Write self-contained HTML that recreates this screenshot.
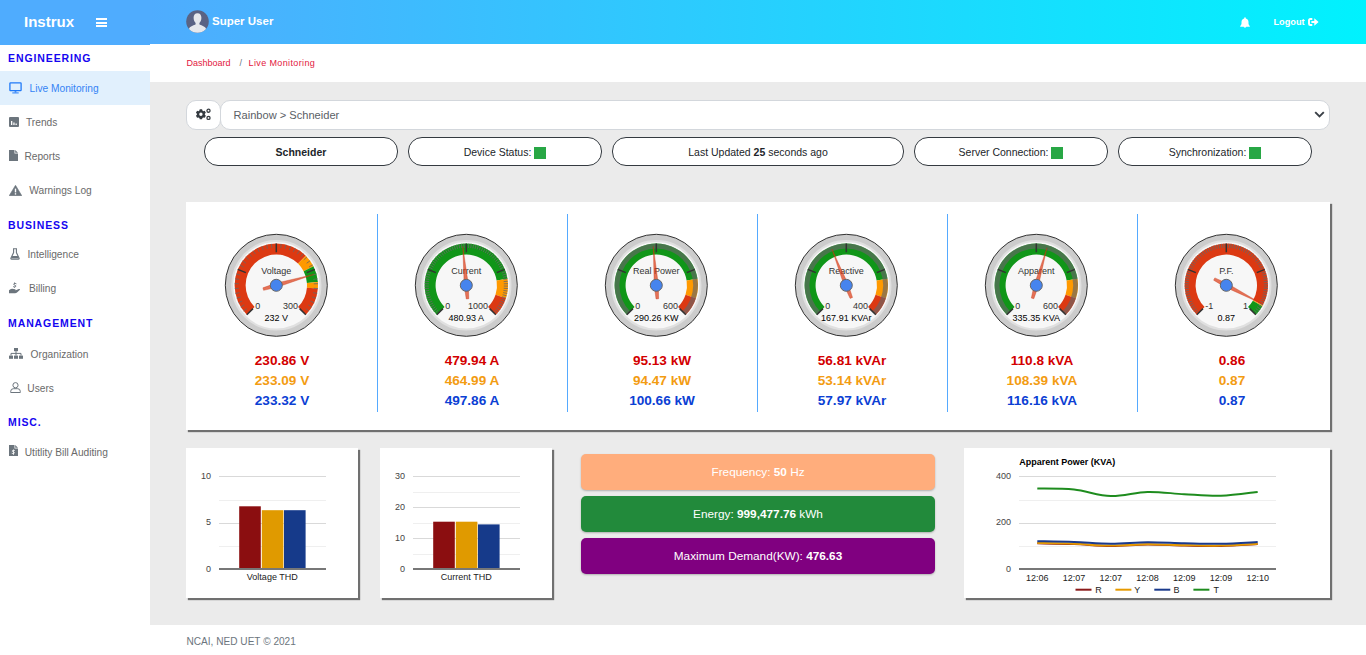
<!DOCTYPE html>
<html><head><meta charset="utf-8">
<style>
*{box-sizing:border-box;margin:0;padding:0}
html,body{width:1366px;height:655px;overflow:hidden;background:#fff;font-family:"Liberation Sans",sans-serif}
.abs{position:absolute}
#brand{left:0;top:0;width:150px;height:45px;background:#4facfe}
#nav{left:150px;top:0;width:1216px;height:44px;background:linear-gradient(to right,#4facfe,#00f2fe)}
#crumb{left:150px;top:44px;width:1216px;height:38px;background:#fff}
#content{left:150px;top:82px;width:1216px;height:543px;background:#ebebeb}
#footer{left:150px;top:625px;width:1216px;height:30px;background:#fff}
.txt{position:absolute;white-space:nowrap;line-height:1}
.sec{position:absolute;left:8px;font-size:10.5px;font-weight:bold;color:#1505f0;letter-spacing:0.9px}
.item{position:absolute;font-size:10.2px;color:#6a6a6a}
.pill{position:absolute;top:137px;height:29px;border:1px solid #343a40;border-radius:14px;background:#fff;font-size:10.5px;color:#212529;text-align:center;line-height:28px;white-space:nowrap}
.sq{display:inline-block;width:12px;height:12px;background:#28a745;vertical-align:-3px;margin-left:3px}
.panel{position:absolute;background:#fff;box-shadow:2px 2px 1px #707070}
.box{position:absolute;left:581px;width:354px;height:36px;border-radius:5px;color:#fff;font-size:11.8px;text-align:center;line-height:37px;white-space:nowrap;box-shadow:0 1px 2px rgba(0,0,0,.25)}
</style></head><body>
<div class="abs" id="brand"></div>
<div class="abs" id="nav"></div>
<div class="abs" id="crumb"></div>
<div class="abs" id="content"></div>
<div class="abs" id="footer"></div>

<!-- brand -->
<div class="txt" style="left:24px;top:14px;font-size:15px;font-weight:bold;color:#fff">Instrux</div>
<div class="abs" style="left:96px;top:18px;width:11px;height:2px;background:#fff"></div>
<div class="abs" style="left:96px;top:21.5px;width:11px;height:2px;background:#fff"></div>
<div class="abs" style="left:96px;top:25px;width:11px;height:2px;background:#fff"></div>

<!-- avatar -->
<svg class="abs" style="left:186px;top:10px" width="23" height="23" viewBox="0 0 23 23">
<defs><clipPath id="av"><circle cx="11.5" cy="11.5" r="11.3"/></clipPath></defs>
<circle cx="11.5" cy="11.5" r="11.3" fill="#5a6384"/>
<g clip-path="url(#av)" fill="#e6e8ec">
<path d="M11.5 3.2c2.6 0 3.9 2 3.9 4.6 0 2.3-1 4.3-2 5.3v1.2c0 .6 3.8 1.3 5.6 3 1 1 1.5 2.5 1.5 5.7H2.5c0-3.2.5-4.7 1.5-5.7 1.8-1.7 5.6-2.4 5.6-3v-1.2c-1-1-2-3-2-5.3 0-2.6 1.3-4.6 3.9-4.6z"/>
</g></svg>
<div class="txt" style="left:212px;top:16px;font-size:11.5px;font-weight:bold;color:#fff">Super User</div>

<!-- bell -->
<svg class="abs" style="left:1240px;top:17px" width="10" height="11" viewBox="0 0 10 11">
<path d="M5 0.3c.5 0 .8.3.8.8v.3c1.7.4 2.7 1.8 2.7 3.5v1.6c0 1 .6 1.8 1.3 2.5v.8H.2v-.8C.9 8.3 1.5 7.5 1.5 6.5V4.9c0-1.7 1-3.1 2.7-3.5v-.3c0-.5.3-.8.8-.8z M3.6 9.3h2.8c0 .8-.6 1.4-1.4 1.4s-1.4-.6-1.4-1.4z" fill="#fff"/>
</svg>
<div class="txt" style="left:1273.5px;top:18px;font-size:9.2px;font-weight:bold;color:#fff">Logout</div>
<svg class="abs" style="left:1308.3px;top:18px" width="11" height="8" viewBox="0 0 11 8">
<path d="M4.3 1H2.3Q1 1 1 2.3v3.4Q1 7 2.3 7h2" stroke="#fff" stroke-width="1.9" fill="none"/>
<path d="M3.4 2.9h2.9V.2L10.6 4 6.3 7.8V5.1H3.4z" fill="#fff"/>
</svg>

<!-- sidebar -->
<div class="sec" style="top:52px">ENGINEERING</div>
<div class="abs" style="left:0;top:71px;width:150px;height:34px;background:#e1f0fd"></div>
<svg class="abs" style="left:9px;top:82px" width="13" height="12" viewBox="0 0 13 12">
<rect x="0.9" y="0.9" width="11.2" height="7.8" rx="0.6" fill="none" stroke="#2079f8" stroke-width="1.3"/>
<rect x="5.6" y="9.2" width="1.8" height="1.2" fill="#2079f8"/><rect x="3.3" y="10.3" width="6.4" height="1.2" fill="#2079f8" fill-opacity="0.8"/>
</svg>
<div class="item" style="left:29.5px;top:83px;color:#3483f5">Live Monitoring</div>

<svg class="abs" style="left:9px;top:116.5px" width="10" height="10" viewBox="0 0 10 10">
<rect x="0" y="0" width="10" height="10" rx="1" fill="#6c757d"/>
<rect x="2" y="4" width="1.3" height="4" fill="#fff"/><rect x="4.3" y="5.5" width="1.3" height="2.5" fill="#fff"/><rect x="6.5" y="6.5" width="1.3" height="1.5" fill="#fff"/>
</svg>
<div class="item" style="left:26px;top:117px">Trends</div>

<svg class="abs" style="left:9px;top:150px" width="9" height="11" viewBox="0 0 9 11">
<path d="M0 0H5.5V3.5H9V11H0Z M6.2 0L9 2.8H6.2Z" fill="#6c757d"/>
</svg>
<div class="item" style="left:24.4px;top:151px">Reports</div>

<svg class="abs" style="left:9px;top:184.5px" width="13" height="11" viewBox="0 0 13 11">
<path d="M6.5 0.3L12.8 10.7H0.2Z" fill="#6c757d" stroke="#6c757d" stroke-width="0.6" stroke-linejoin="round"/>
<rect x="5.8" y="3.6" width="1.4" height="3.8" fill="#fff"/><rect x="5.8" y="8.2" width="1.4" height="1.4" fill="#fff"/>
</svg>
<div class="item" style="left:29.3px;top:185px">Warnings Log</div>

<div class="sec" style="top:219px">BUSINESS</div>
<svg class="abs" style="left:9.5px;top:248px" width="10" height="12" viewBox="0 0 10 12">
<path d="M3 .8h4M3.6 .8v3.8L.9 10.2q-.3.9.7.9h6.8q1 0 .7-.9L6.4 4.6V.8" fill="none" stroke="#6c757d" stroke-width="1.1"/>
<path d="M2.2 8h5.6l.9 2.3H1.3z" fill="#6c757d"/>
</svg>
<div class="item" style="left:27.4px;top:249px">Intelligence</div>

<svg class="abs" style="left:9px;top:282px" width="12" height="12" viewBox="0 0 12 12">
<path d="M5.5 0.5v1M4.2 4.6q1.3.8 2.5 0q.6-1-.9-1.4q-1.5-.4-.9-1.4q1.2-.8 2.5 0M5.5 4.8v.8" fill="none" stroke="#6c757d" stroke-width="1"/>
<path d="M0 8.2q1.5-1.7 3.3-1.5l2.8.5q.9.3.4 1H3.8h3l3-1.2q1.6-.3 1.2.8L8 10.5q-.8.8-2 .8H0z" fill="#6c757d"/>
</svg>
<div class="item" style="left:28.9px;top:283px">Billing</div>

<div class="sec" style="top:317px">MANAGEMENT</div>
<svg class="abs" style="left:9px;top:348px" width="14" height="11" viewBox="0 0 14 11">
<rect x="5" y="0" width="4" height="3.2" fill="#6c757d"/><rect x="0" y="7.6" width="4" height="3.2" fill="#6c757d"/><rect x="5" y="7.6" width="4" height="3.2" fill="#6c757d"/><rect x="10" y="7.6" width="4" height="3.2" fill="#6c757d"/>
<path d="M7 3.2v4.4M2 7.6V5.4h10v2.2" fill="none" stroke="#6c757d" stroke-width="1"/>
</svg>
<div class="item" style="left:30.6px;top:348.5px">Organization</div>

<svg class="abs" style="left:9.5px;top:381.5px" width="11" height="11" viewBox="0 0 11 11">
<circle cx="5.5" cy="3.2" r="2.6" fill="none" stroke="#6c757d" stroke-width="1"/>
<path d="M.7 10.5V9.4q0-2.7 2.7-2.7h4.2q2.7 0 2.7 2.7v1.1z" fill="none" stroke="#6c757d" stroke-width="1"/>
</svg>
<div class="item" style="left:27.3px;top:382.5px">Users</div>

<div class="sec" style="top:416px">MISC.</div>
<svg class="abs" style="left:9px;top:445px" width="9" height="11" viewBox="0 0 9 11">
<path d="M0 0H5.5V3.5H9V11H0Z M6.2 0L9 2.8H6.2Z" fill="#6c757d"/>
<path d="M4.5 4.6v5.2M5.8 5.6q-1.3-.7-2.4 0q-.6.9.9 1.2q1.6.4.9 1.4q-1.2.7-2.5 0" fill="none" stroke="#fff" stroke-width=".8"/>
</svg>
<div class="item" style="left:24.7px;top:446.5px">Utitlity Bill Auditing</div>

<!-- breadcrumb -->
<div class="txt" style="left:186.5px;top:59px;font-size:9px;color:#e3173e">Dashboard</div>
<div class="txt" style="left:239.5px;top:59px;font-size:9px;color:#6c757d">/</div>
<div class="txt" style="left:248.5px;top:59px;font-size:9px;letter-spacing:0.38px;color:#e3173e">Live Monitoring</div>

<!-- select row -->
<div class="abs" style="left:186px;top:100px;width:35px;height:30px;background:#fff;border:1px solid #d3d7dc;border-radius:10px"></div>
<svg class="abs" style="left:194px;top:106px" width="20" height="16" viewBox="0 0 20 16">
<path d="M5.40 4.59L5.73 3.23L8.07 3.23L8.40 4.59L9.36 5.15L10.70 4.75L11.87 6.78L10.86 7.74L10.86 8.86L11.87 9.82L10.70 11.85L9.36 11.45L8.40 12.01L8.07 13.37L5.73 13.37L5.40 12.01L4.44 11.45L3.10 11.85L1.93 9.82L2.94 8.86L2.94 7.74L1.93 6.78L3.10 4.75L4.44 5.15ZM8.60 8.30A1.7 1.7 0 1 0 5.20 8.30A1.7 1.7 0 1 0 8.60 8.30Z" fill="#343a40" fill-rule="evenodd"/>
<circle cx="14.5" cy="4.7" r="1.55" fill="none" stroke="#343a40" stroke-width="1.3"/>
<circle cx="14.5" cy="11.9" r="1.55" fill="none" stroke="#343a40" stroke-width="1.3"/>
</svg>
<div class="abs" style="left:220px;top:100px;width:1110px;height:30px;background:#fff;border:1px solid #d3d7dc;border-radius:10px"></div>
<div class="txt" style="left:233.5px;top:110.3px;font-size:11.1px;color:#5a6066">Rainbow &gt; Schneider</div>
<svg class="abs" style="left:1314.2px;top:110.8px" width="11" height="7" viewBox="0 0 11 7">
<path d="M1.2 1.2L5.5 5.5 9.8 1.2" fill="none" stroke="#3a4047" stroke-width="1.9"/>
</svg>

<!-- pills -->
<div class="pill" style="left:204px;width:194px;font-weight:bold">Schneider</div>
<div class="pill" style="left:408px;width:194px">Device Status:<span class="sq"></span></div>
<div class="pill" style="left:612px;width:292px">Last Updated <b>25</b> seconds ago</div>
<div class="pill" style="left:914px;width:194px">Server Connection:<span class="sq"></span></div>
<div class="pill" style="left:1118px;width:194px">Synchronization:<span class="sq"></span></div>

<!-- panels -->
<div class="panel" style="left:186px;top:202px;width:1144px;height:228px"></div>
<div class="panel" style="left:186px;top:448px;width:172px;height:150px"></div>
<div class="panel" style="left:380px;top:448px;width:172px;height:150px"></div>
<div class="panel" style="left:964px;top:448px;width:366px;height:150px"></div>

<div class="box" style="top:454px;background:#ffad7c">Frequency: <b>50</b> Hz</div>
<div class="box" style="top:496px;background:#228a3b">Energy: <b>999,477.76</b> kWh</div>
<div class="box" style="top:538px;background:#800080">Maximum Demand(KW): <b>476.63</b></div>

<svg class="abs" style="left:0;top:0" width="1366" height="655" viewBox="0 0 1366 655" font-family="Liberation Sans, sans-serif">
<circle cx="276.3" cy="285.3" r="51" fill="#cccccc" stroke="#333333" stroke-width="1"/>
<circle cx="276.3" cy="285.3" r="44.2" fill="#f7f7f7" stroke="#e0e0e0" stroke-width="2"/>
<path d="M246.81 314.79A41.7 41.7 0 0 1 305.79 255.81L298.01 263.59A30.7 30.7 0 0 0 254.59 307.01Z" fill="#dc3912"/>
<path d="M305.79 255.81A41.7 41.7 0 0 1 313.45 266.37L303.65 271.36A30.7 30.7 0 0 0 298.01 263.59Z" fill="#ff9900"/>
<path d="M313.45 266.37A41.7 41.7 0 0 1 317.87 282.03L306.91 282.89A30.7 30.7 0 0 0 303.65 271.36Z" fill="#109618"/>
<path d="M317.87 282.03A41.7 41.7 0 0 1 317.87 288.57L306.91 287.71A30.7 30.7 0 0 0 306.91 282.89Z" fill="#ff9900"/>
<path d="M317.87 288.57A41.7 41.7 0 0 1 305.79 314.79L298.01 307.01A30.7 30.7 0 0 0 306.91 287.71Z" fill="#dc3912"/>
<path d="M243.55 311.12L246.85 308.52M240.74 307.09L244.33 304.89M238.43 302.76L242.24 301.00M236.64 298.19L240.64 296.89M235.40 293.44L239.52 292.62M234.73 288.57L238.92 288.24M234.63 283.66L238.83 283.83M235.11 278.78L239.26 279.43M236.17 273.98L240.21 275.12M239.92 264.92L243.58 266.98M242.56 260.79L245.96 263.26M245.68 256.99L248.76 259.84M249.22 253.59L251.95 256.78M253.13 250.63L255.47 254.12M257.37 248.15L259.28 251.89M261.87 246.18L263.32 250.12M266.57 244.75L267.55 248.84M271.40 243.89L271.89 248.06M281.20 243.89L280.71 248.06M286.03 244.75L285.05 248.84M290.73 246.18L289.28 250.12M295.23 248.15L293.32 251.89M299.47 250.63L297.13 254.12M303.38 253.59L300.65 256.78M306.92 256.99L303.84 259.84M310.04 260.79L306.64 263.26M312.68 264.92L309.02 266.98M316.43 273.98L312.39 275.12M317.49 278.78L313.34 279.43M317.97 283.66L313.77 283.83M317.87 288.57L313.68 288.24M317.20 293.44L313.08 292.62M315.96 298.19L311.96 296.89M314.17 302.76L310.36 301.00M311.86 307.09L308.27 304.89M309.05 311.12L305.75 308.52" stroke="#666666" stroke-width="1" stroke-opacity="0.8" fill="none"/>
<path d="M246.81 314.79L252.97 308.63M237.77 269.34L245.81 272.67M276.30 243.60L276.30 252.30M314.83 269.34L306.79 272.67M305.79 314.79L299.63 308.63" stroke="#333333" stroke-width="1.5" fill="none"/>
<text x="276.3" y="273.8" text-anchor="middle" font-size="9" fill="#333333">Voltage</text>
<text x="255.3" y="309.1" text-anchor="start" font-size="9" fill="#333333">0</text>
<text x="298.1" y="309.1" text-anchor="end" font-size="9" fill="#333333">300</text>
<text x="276.3" y="320.90000000000003" text-anchor="middle" font-size="9" fill="#000000">232 V</text>
<path d="M313.75 274.42L276.89 287.32L263.60 290.34L262.88 287.85L275.71 283.28Z" fill="#dc3912" fill-opacity="0.7" stroke="#c63310" stroke-width="0.6" stroke-opacity="0.6" stroke-linejoin="round"/>
<circle cx="276.3" cy="285.3" r="6" fill="#4684ee" stroke="#666666" stroke-width="1"/>
<circle cx="466.3" cy="285.3" r="51" fill="#cccccc" stroke="#333333" stroke-width="1"/>
<circle cx="466.3" cy="285.3" r="44.2" fill="#f7f7f7" stroke="#e0e0e0" stroke-width="2"/>
<path d="M436.81 314.79A41.7 41.7 0 1 1 507.49 278.78L496.62 280.50A30.7 30.7 0 1 0 444.59 307.01Z" fill="#109618"/>
<path d="M507.49 278.78A41.7 41.7 0 0 1 505.96 298.19L495.50 294.79A30.7 30.7 0 0 0 496.62 280.50Z" fill="#ff9900"/>
<path d="M505.96 298.19A41.7 41.7 0 0 1 495.79 314.79L488.01 307.01A30.7 30.7 0 0 0 495.50 294.79Z" fill="#dc3912"/>
<path d="M435.13 313.00L438.27 310.21M433.55 311.12L436.85 308.52M432.09 309.14L435.53 306.74M430.74 307.09L434.33 304.89M429.52 304.96L433.23 302.98M428.43 302.76L432.24 301.00M427.47 300.50L431.38 298.97M426.64 298.19L430.64 296.89M425.95 295.83L430.02 294.77M425.40 293.44L429.52 292.62M424.99 291.01L429.15 290.44M424.73 288.57L428.92 288.24M424.61 286.12L428.81 286.04M424.63 283.66L428.83 283.83M424.80 281.21L428.98 281.62M425.11 278.78L429.26 279.43M425.57 276.36L429.67 277.26M426.17 273.98L430.21 275.12M426.90 271.64L430.87 273.01M428.78 267.10L432.56 268.93M429.92 264.92L433.58 266.98M431.18 262.82L434.72 265.08M432.56 260.79L435.96 263.26M434.07 258.85L437.31 261.51M435.68 256.99L438.76 259.84M437.40 255.24L440.31 258.27M439.22 253.59L441.95 256.78M441.13 252.05L443.67 255.40M443.13 250.63L445.47 254.12M445.21 249.32L447.34 252.95M447.37 248.15L449.28 251.89M449.59 247.09L451.27 250.94M451.87 246.18L453.32 250.12M454.20 245.40L455.41 249.41M456.57 244.75L457.55 248.84M458.97 244.25L459.71 248.38M461.40 243.89L461.89 248.06M463.85 243.67L464.09 247.87M468.75 243.67L468.51 247.87M471.20 243.89L470.71 248.06M473.63 244.25L472.89 248.38M476.03 244.75L475.05 248.84M478.40 245.40L477.19 249.41M480.73 246.18L479.28 250.12M483.01 247.09L481.33 250.94M485.23 248.15L483.32 251.89M487.39 249.32L485.26 252.95M489.47 250.63L487.13 254.12M491.47 252.05L488.93 255.40M493.38 253.59L490.65 256.78M495.20 255.24L492.29 258.27M496.92 256.99L493.84 259.84M498.53 258.85L495.29 261.51M500.04 260.79L496.64 263.26M501.42 262.82L497.88 265.08M502.68 264.92L499.02 266.98M503.82 267.10L500.04 268.93M505.70 271.64L501.73 273.01M506.43 273.98L502.39 275.12M507.03 276.36L502.93 277.26M507.49 278.78L503.34 279.43M507.80 281.21L503.62 281.62M507.97 283.66L503.77 283.83M507.99 286.12L503.79 286.04M507.87 288.57L503.68 288.24M507.61 291.01L503.45 290.44M507.20 293.44L503.08 292.62M506.65 295.83L502.58 294.77M505.96 298.19L501.96 296.89M505.13 300.50L501.22 298.97M504.17 302.76L500.36 301.00M503.08 304.96L499.37 302.98M501.86 307.09L498.27 304.89M500.51 309.14L497.07 306.74M499.05 311.12L495.75 308.52M497.47 313.00L494.33 310.21" stroke="#666666" stroke-width="1" stroke-opacity="0.8" fill="none"/>
<path d="M436.81 314.79L442.97 308.63M427.77 269.34L435.81 272.67M466.30 243.60L466.30 252.30M504.83 269.34L496.79 272.67M495.79 314.79L489.63 308.63" stroke="#333333" stroke-width="1.5" fill="none"/>
<text x="466.3" y="273.8" text-anchor="middle" font-size="9" fill="#333333">Current</text>
<text x="445.3" y="309.1" text-anchor="start" font-size="9" fill="#333333">0</text>
<text x="488.1" y="309.1" text-anchor="end" font-size="9" fill="#333333">1000</text>
<text x="466.3" y="320.90000000000003" text-anchor="middle" font-size="9" fill="#000000">480.93 A</text>
<path d="M462.80 246.46L468.39 285.11L468.82 298.73L466.23 298.96L464.21 285.49Z" fill="#dc3912" fill-opacity="0.7" stroke="#c63310" stroke-width="0.6" stroke-opacity="0.6" stroke-linejoin="round"/>
<circle cx="466.3" cy="285.3" r="6" fill="#4684ee" stroke="#666666" stroke-width="1"/>
<circle cx="656.3" cy="285.3" r="51" fill="#cccccc" stroke="#333333" stroke-width="1"/>
<circle cx="656.3" cy="285.3" r="44.2" fill="#f7f7f7" stroke="#e0e0e0" stroke-width="2"/>
<path d="M626.81 314.79A41.7 41.7 0 1 1 697.49 278.78L686.62 280.50A30.7 30.7 0 1 0 634.59 307.01Z" fill="#109618"/>
<path d="M697.49 278.78A41.7 41.7 0 0 1 695.96 298.19L685.50 294.79A30.7 30.7 0 0 0 686.62 280.50Z" fill="#ff9900"/>
<path d="M695.96 298.19A41.7 41.7 0 0 1 685.79 314.79L678.01 307.01A30.7 30.7 0 0 0 685.50 294.79Z" fill="#dc3912"/>
<path d="M626.81 314.79A41.7 41.7 0 1 1 685.79 314.79L682.39 311.39A36.9 36.9 0 1 0 630.21 311.39Z" fill="#666666" fill-opacity="0.66"/>
<path d="M626.81 314.79L632.97 308.63M617.77 269.34L625.81 272.67M656.30 243.60L656.30 252.30M694.83 269.34L686.79 272.67M685.79 314.79L679.63 308.63" stroke="#333333" stroke-width="1.5" fill="none"/>
<text x="656.3" y="273.8" text-anchor="middle" font-size="9" fill="#333333">Real Power</text>
<text x="635.3" y="309.1" text-anchor="start" font-size="9" fill="#333333">0</text>
<text x="678.0999999999999" y="309.1" text-anchor="end" font-size="9" fill="#333333">600</text>
<text x="656.3" y="320.90000000000003" text-anchor="middle" font-size="9" fill="#000000">290.26 KW</text>
<path d="M653.32 246.41L658.39 285.14L658.64 298.76L656.04 298.96L654.21 285.46Z" fill="#dc3912" fill-opacity="0.7" stroke="#c63310" stroke-width="0.6" stroke-opacity="0.6" stroke-linejoin="round"/>
<circle cx="656.3" cy="285.3" r="6" fill="#4684ee" stroke="#666666" stroke-width="1"/>
<circle cx="846.3" cy="285.3" r="51" fill="#cccccc" stroke="#333333" stroke-width="1"/>
<circle cx="846.3" cy="285.3" r="44.2" fill="#f7f7f7" stroke="#e0e0e0" stroke-width="2"/>
<path d="M816.81 314.79A41.7 41.7 0 1 1 887.49 278.78L876.62 280.50A30.7 30.7 0 1 0 824.59 307.01Z" fill="#109618"/>
<path d="M887.49 278.78A41.7 41.7 0 0 1 885.96 298.19L875.50 294.79A30.7 30.7 0 0 0 876.62 280.50Z" fill="#ff9900"/>
<path d="M885.96 298.19A41.7 41.7 0 0 1 875.79 314.79L868.01 307.01A30.7 30.7 0 0 0 875.50 294.79Z" fill="#dc3912"/>
<path d="M816.81 314.79A41.7 41.7 0 1 1 875.79 314.79L872.39 311.39A36.9 36.9 0 1 0 820.21 311.39Z" fill="#666666" fill-opacity="0.66"/>
<path d="M816.81 314.79L822.97 308.63M807.77 269.34L815.81 272.67M846.30 243.60L846.30 252.30M884.83 269.34L876.79 272.67M875.79 314.79L869.63 308.63" stroke="#333333" stroke-width="1.5" fill="none"/>
<text x="846.3" y="273.8" text-anchor="middle" font-size="9" fill="#333333">Reactive</text>
<text x="825.3" y="309.1" text-anchor="start" font-size="9" fill="#333333">0</text>
<text x="868.0999999999999" y="309.1" text-anchor="end" font-size="9" fill="#333333">400</text>
<text x="846.3" y="320.90000000000003" text-anchor="middle" font-size="9" fill="#000000">167.91 KVAr</text>
<path d="M831.90 249.05L848.25 284.52L852.53 297.46L850.11 298.42L844.35 286.08Z" fill="#dc3912" fill-opacity="0.7" stroke="#c63310" stroke-width="0.6" stroke-opacity="0.6" stroke-linejoin="round"/>
<circle cx="846.3" cy="285.3" r="6" fill="#4684ee" stroke="#666666" stroke-width="1"/>
<circle cx="1036.3" cy="285.3" r="51" fill="#cccccc" stroke="#333333" stroke-width="1"/>
<circle cx="1036.3" cy="285.3" r="44.2" fill="#f7f7f7" stroke="#e0e0e0" stroke-width="2"/>
<path d="M1006.81 314.79A41.7 41.7 0 1 1 1077.49 278.78L1066.62 280.50A30.7 30.7 0 1 0 1014.59 307.01Z" fill="#109618"/>
<path d="M1077.49 278.78A41.7 41.7 0 0 1 1075.96 298.19L1065.50 294.79A30.7 30.7 0 0 0 1066.62 280.50Z" fill="#ff9900"/>
<path d="M1075.96 298.19A41.7 41.7 0 0 1 1065.79 314.79L1058.01 307.01A30.7 30.7 0 0 0 1065.50 294.79Z" fill="#dc3912"/>
<path d="M1006.81 314.79A41.7 41.7 0 1 1 1065.79 314.79L1062.39 311.39A36.9 36.9 0 1 0 1010.21 311.39Z" fill="#666666" fill-opacity="0.66"/>
<path d="M1006.81 314.79L1012.97 308.63M997.77 269.34L1005.81 272.67M1036.30 243.60L1036.30 252.30M1074.83 269.34L1066.79 272.67M1065.79 314.79L1059.63 308.63" stroke="#333333" stroke-width="1.5" fill="none"/>
<text x="1036.3" y="273.8" text-anchor="middle" font-size="9" fill="#333333">Apparent</text>
<text x="1015.3" y="309.1" text-anchor="start" font-size="9" fill="#333333">0</text>
<text x="1058.1" y="309.1" text-anchor="end" font-size="9" fill="#333333">600</text>
<text x="1036.3" y="320.90000000000003" text-anchor="middle" font-size="9" fill="#000000">335.35 KVA</text>
<path d="M1046.99 247.79L1038.32 285.88L1033.82 298.74L1031.32 298.02L1034.28 284.72Z" fill="#dc3912" fill-opacity="0.7" stroke="#c63310" stroke-width="0.6" stroke-opacity="0.6" stroke-linejoin="round"/>
<circle cx="1036.3" cy="285.3" r="6" fill="#4684ee" stroke="#666666" stroke-width="1"/>
<circle cx="1226.3" cy="285.3" r="51" fill="#cccccc" stroke="#333333" stroke-width="1"/>
<circle cx="1226.3" cy="285.3" r="44.2" fill="#f7f7f7" stroke="#e0e0e0" stroke-width="2"/>
<path d="M1196.81 314.79A41.7 41.7 0 1 1 1262.84 305.39L1253.20 300.09A30.7 30.7 0 1 0 1204.59 307.01Z" fill="#dc3912"/>
<path d="M1262.84 305.39A41.7 41.7 0 0 1 1262.36 306.24L1252.85 300.72A30.7 30.7 0 0 0 1253.20 300.09Z" fill="#ff9900"/>
<path d="M1262.36 306.24A41.7 41.7 0 0 1 1255.79 314.79L1248.01 307.01A30.7 30.7 0 0 0 1252.85 300.72Z" fill="#109618"/>
<path d="M1195.13 313.00L1198.27 310.21M1193.55 311.12L1196.85 308.52M1192.09 309.14L1195.53 306.74M1190.74 307.09L1194.33 304.89M1189.52 304.96L1193.23 302.98M1188.43 302.76L1192.24 301.00M1187.47 300.50L1191.38 298.97M1186.64 298.19L1190.64 296.89M1185.95 295.83L1190.02 294.77M1185.40 293.44L1189.52 292.62M1184.99 291.01L1189.15 290.44M1184.73 288.57L1188.92 288.24M1184.61 286.12L1188.81 286.04M1184.63 283.66L1188.83 283.83M1184.80 281.21L1188.98 281.62M1185.11 278.78L1189.26 279.43M1185.57 276.36L1189.67 277.26M1186.17 273.98L1190.21 275.12M1186.90 271.64L1190.87 273.01M1188.78 267.10L1192.56 268.93M1189.92 264.92L1193.58 266.98M1191.18 262.82L1194.72 265.08M1192.56 260.79L1195.96 263.26M1194.07 258.85L1197.31 261.51M1195.68 256.99L1198.76 259.84M1197.40 255.24L1200.31 258.27M1199.22 253.59L1201.95 256.78M1201.13 252.05L1203.67 255.40M1203.13 250.63L1205.47 254.12M1205.21 249.32L1207.34 252.95M1207.37 248.15L1209.28 251.89M1209.59 247.09L1211.27 250.94M1211.87 246.18L1213.32 250.12M1214.20 245.40L1215.41 249.41M1216.57 244.75L1217.55 248.84M1218.97 244.25L1219.71 248.38M1221.40 243.89L1221.89 248.06M1223.85 243.67L1224.09 247.87M1228.75 243.67L1228.51 247.87M1231.20 243.89L1230.71 248.06M1233.63 244.25L1232.89 248.38M1236.03 244.75L1235.05 248.84M1238.40 245.40L1237.19 249.41M1240.73 246.18L1239.28 250.12M1243.01 247.09L1241.33 250.94M1245.23 248.15L1243.32 251.89M1247.39 249.32L1245.26 252.95M1249.47 250.63L1247.13 254.12M1251.47 252.05L1248.93 255.40M1253.38 253.59L1250.65 256.78M1255.20 255.24L1252.29 258.27M1256.92 256.99L1253.84 259.84M1258.53 258.85L1255.29 261.51M1260.04 260.79L1256.64 263.26M1261.42 262.82L1257.88 265.08M1262.68 264.92L1259.02 266.98M1263.82 267.10L1260.04 268.93M1265.70 271.64L1261.73 273.01M1266.43 273.98L1262.39 275.12M1267.03 276.36L1262.93 277.26M1267.49 278.78L1263.34 279.43M1267.80 281.21L1263.62 281.62M1267.97 283.66L1263.77 283.83M1267.99 286.12L1263.79 286.04M1267.87 288.57L1263.68 288.24M1267.61 291.01L1263.45 290.44M1267.20 293.44L1263.08 292.62M1266.65 295.83L1262.58 294.77M1265.96 298.19L1261.96 296.89M1265.13 300.50L1261.22 298.97M1264.17 302.76L1260.36 301.00M1263.08 304.96L1259.37 302.98M1261.86 307.09L1258.27 304.89M1260.51 309.14L1257.07 306.74M1259.05 311.12L1255.75 308.52M1257.47 313.00L1254.33 310.21" stroke="#666666" stroke-width="1" stroke-opacity="0.8" fill="none"/>
<path d="M1196.81 314.79L1202.97 308.63M1187.77 269.34L1195.81 272.67M1226.30 243.60L1226.30 252.30M1264.83 269.34L1256.79 272.67M1255.79 314.79L1249.63 308.63" stroke="#333333" stroke-width="1.5" fill="none"/>
<text x="1226.3" y="273.8" text-anchor="middle" font-size="9" fill="#333333">P.F.</text>
<text x="1205.3" y="309.1" text-anchor="start" font-size="9" fill="#333333">-1</text>
<text x="1248.1" y="309.1" text-anchor="end" font-size="9" fill="#333333">1</text>
<text x="1226.3" y="320.90000000000003" text-anchor="middle" font-size="9" fill="#000000">0.87</text>
<path d="M1260.91 303.28L1225.33 287.16L1213.63 280.18L1214.83 277.88L1227.27 283.44Z" fill="#dc3912" fill-opacity="0.7" stroke="#c63310" stroke-width="0.6" stroke-opacity="0.6" stroke-linejoin="round"/>
<circle cx="1226.3" cy="285.3" r="6" fill="#4684ee" stroke="#666666" stroke-width="1"/>
<text x="282" y="364.5" text-anchor="middle" font-size="13.6" font-weight="bold" fill="#d30000">230.86 V</text>
<text x="282" y="384.5" text-anchor="middle" font-size="13.6" font-weight="bold" fill="#f39c12">233.09 V</text>
<text x="282" y="404.5" text-anchor="middle" font-size="13.6" font-weight="bold" fill="#0b40d4">233.32 V</text>
<text x="472" y="364.5" text-anchor="middle" font-size="13.6" font-weight="bold" fill="#d30000">479.94 A</text>
<text x="472" y="384.5" text-anchor="middle" font-size="13.6" font-weight="bold" fill="#f39c12">464.99 A</text>
<text x="472" y="404.5" text-anchor="middle" font-size="13.6" font-weight="bold" fill="#0b40d4">497.86 A</text>
<text x="662" y="364.5" text-anchor="middle" font-size="13.6" font-weight="bold" fill="#d30000">95.13 kW</text>
<text x="662" y="384.5" text-anchor="middle" font-size="13.6" font-weight="bold" fill="#f39c12">94.47 kW</text>
<text x="662" y="404.5" text-anchor="middle" font-size="13.6" font-weight="bold" fill="#0b40d4">100.66 kW</text>
<text x="852" y="364.5" text-anchor="middle" font-size="13.6" font-weight="bold" fill="#d30000">56.81 kVAr</text>
<text x="852" y="384.5" text-anchor="middle" font-size="13.6" font-weight="bold" fill="#f39c12">53.14 kVAr</text>
<text x="852" y="404.5" text-anchor="middle" font-size="13.6" font-weight="bold" fill="#0b40d4">57.97 kVAr</text>
<text x="1042" y="364.5" text-anchor="middle" font-size="13.6" font-weight="bold" fill="#d30000">110.8 kVA</text>
<text x="1042" y="384.5" text-anchor="middle" font-size="13.6" font-weight="bold" fill="#f39c12">108.39 kVA</text>
<text x="1042" y="404.5" text-anchor="middle" font-size="13.6" font-weight="bold" fill="#0b40d4">116.16 kVA</text>
<text x="1232" y="364.5" text-anchor="middle" font-size="13.6" font-weight="bold" fill="#d30000">0.86</text>
<text x="1232" y="384.5" text-anchor="middle" font-size="13.6" font-weight="bold" fill="#f39c12">0.87</text>
<text x="1232" y="404.5" text-anchor="middle" font-size="13.6" font-weight="bold" fill="#0b40d4">0.87</text>
<rect x="377" y="214" width="1" height="198" fill="#55aaff"/><rect x="567" y="214" width="1" height="198" fill="#55aaff"/><rect x="757" y="214" width="1" height="198" fill="#55aaff"/><rect x="947" y="214" width="1" height="198" fill="#55aaff"/><rect x="1137" y="214" width="1" height="198" fill="#55aaff"/>
<rect x="219" y="546" width="107" height="1" fill="#efefef"/>
<rect x="219" y="500" width="107" height="1" fill="#efefef"/>
<text x="211" y="571.9" text-anchor="end" font-size="9" fill="#444444">0</text>
<rect x="219" y="523" width="107" height="1" fill="#d9d9d9"/>
<text x="211" y="525.4" text-anchor="end" font-size="9" fill="#444444">5</text>
<rect x="219" y="476" width="107" height="1" fill="#d9d9d9"/>
<text x="211" y="478.9" text-anchor="end" font-size="9" fill="#444444">10</text>
<rect x="239.2" y="506.3" width="21.6" height="63.0" fill="#8b0e10"/>
<rect x="261.8" y="510.2" width="21.6" height="59.1" fill="#e09a00"/>
<rect x="284.0" y="510.2" width="21.6" height="59.1" fill="#163a8a"/>
<rect x="219" y="568" width="107" height="2" fill="#777777"/>
<text x="272.3" y="580" text-anchor="middle" font-size="9" fill="#222222">Voltage THD</text>
<rect x="413" y="554" width="107" height="1" fill="#efefef"/>
<rect x="413" y="523" width="107" height="1" fill="#efefef"/>
<rect x="413" y="492" width="107" height="1" fill="#efefef"/>
<text x="405" y="571.9" text-anchor="end" font-size="9" fill="#444444">0</text>
<rect x="413" y="538" width="107" height="1" fill="#d9d9d9"/>
<text x="405" y="540.9" text-anchor="end" font-size="9" fill="#444444">10</text>
<rect x="413" y="507" width="107" height="1" fill="#d9d9d9"/>
<text x="405" y="509.9" text-anchor="end" font-size="9" fill="#444444">20</text>
<rect x="413" y="476" width="107" height="1" fill="#d9d9d9"/>
<text x="405" y="478.9" text-anchor="end" font-size="9" fill="#444444">30</text>
<rect x="433.2" y="521.7" width="21.6" height="47.6" fill="#8b0e10"/>
<rect x="455.8" y="521.7" width="21.6" height="47.6" fill="#e09a00"/>
<rect x="478.0" y="524.4" width="21.6" height="44.9" fill="#163a8a"/>
<rect x="413" y="568" width="107" height="2" fill="#777777"/>
<text x="466.3" y="580" text-anchor="middle" font-size="9" fill="#222222">Current THD</text>
<rect x="1019" y="546" width="257" height="1" fill="#efefef"/>
<rect x="1019" y="500" width="257" height="1" fill="#efefef"/>
<text x="1011" y="571.8" text-anchor="end" font-size="9" fill="#444444">0</text>
<rect x="1019" y="523" width="257" height="1" fill="#d9d9d9"/>
<text x="1011" y="525.3" text-anchor="end" font-size="9" fill="#444444">200</text>
<rect x="1019" y="476" width="257" height="1" fill="#d9d9d9"/>
<text x="1011" y="478.8" text-anchor="end" font-size="9" fill="#444444">400</text>
<rect x="1019" y="568" width="257" height="2" fill="#777777"/>
<path d="M1037.30 543.30C1043.42 543.43 1061.79 543.67 1074.03 544.10C1086.27 544.53 1098.52 545.83 1110.76 545.90C1123.00 545.97 1135.25 544.57 1147.49 544.50C1159.73 544.43 1171.98 545.27 1184.22 545.50C1196.46 545.73 1208.71 546.13 1220.95 545.90C1233.19 545.67 1251.56 544.40 1257.68 544.10" stroke="#8b1a1a" stroke-width="2" fill="none"/>
<path d="M1037.30 543.00C1043.42 543.13 1061.79 543.37 1074.03 543.80C1086.27 544.23 1098.52 545.53 1110.76 545.60C1123.00 545.67 1135.25 544.27 1147.49 544.20C1159.73 544.13 1171.98 544.97 1184.22 545.20C1196.46 545.43 1208.71 545.83 1220.95 545.60C1233.19 545.37 1251.56 544.10 1257.68 543.80" stroke="#e69a00" stroke-width="2" fill="none"/>
<path d="M1037.30 541.20C1043.42 541.33 1061.79 541.58 1074.03 542.00C1086.27 542.42 1098.52 543.65 1110.76 543.70C1123.00 543.75 1135.25 542.37 1147.49 542.30C1159.73 542.23 1171.98 543.05 1184.22 543.30C1196.46 543.55 1208.71 544.02 1220.95 543.80C1233.19 543.58 1251.56 542.30 1257.68 542.00" stroke="#1a3a8c" stroke-width="2" fill="none"/>
<path d="M1037.30 488.50C1043.42 488.68 1061.79 488.33 1074.03 489.60C1086.27 490.87 1098.52 495.72 1110.76 496.10C1123.00 496.48 1135.25 492.22 1147.49 491.90C1159.73 491.58 1171.98 493.57 1184.22 494.20C1196.46 494.83 1208.71 496.08 1220.95 495.70C1233.19 495.32 1251.56 492.53 1257.68 491.90" stroke="#1e8c1e" stroke-width="2" fill="none"/>
<text x="1037.3" y="581" text-anchor="middle" font-size="9" fill="#222222">12:06</text>
<text x="1074.0" y="581" text-anchor="middle" font-size="9" fill="#222222">12:07</text>
<text x="1110.8" y="581" text-anchor="middle" font-size="9" fill="#222222">12:07</text>
<text x="1147.5" y="581" text-anchor="middle" font-size="9" fill="#222222">12:08</text>
<text x="1184.2" y="581" text-anchor="middle" font-size="9" fill="#222222">12:09</text>
<text x="1220.9" y="581" text-anchor="middle" font-size="9" fill="#222222">12:09</text>
<text x="1257.7" y="581" text-anchor="middle" font-size="9" fill="#222222">12:10</text>
<text x="1019.3" y="465.3" font-size="9" font-weight="bold" fill="#000000">Apparent Power (KVA)</text>
<rect x="1075.5" y="588.7" width="16" height="2" fill="#8b1a1a"/>
<text x="1095.3" y="593" font-size="9" fill="#222222">R</text>
<rect x="1115.4" y="588.7" width="16" height="2" fill="#e69a00"/>
<text x="1134.2" y="593" font-size="9" fill="#222222">Y</text>
<rect x="1154.3" y="588.7" width="16" height="2" fill="#1a3a8c"/>
<text x="1173.4" y="593" font-size="9" fill="#222222">B</text>
<rect x="1193.4" y="588.7" width="16" height="2" fill="#1e8c1e"/>
<text x="1213.4" y="593" font-size="9" fill="#222222">T</text>
</svg>

<div class="txt" style="left:186.5px;top:637px;font-size:10.1px;color:#6c757d">NCAI, NED UET © 2021</div>
</body></html>
